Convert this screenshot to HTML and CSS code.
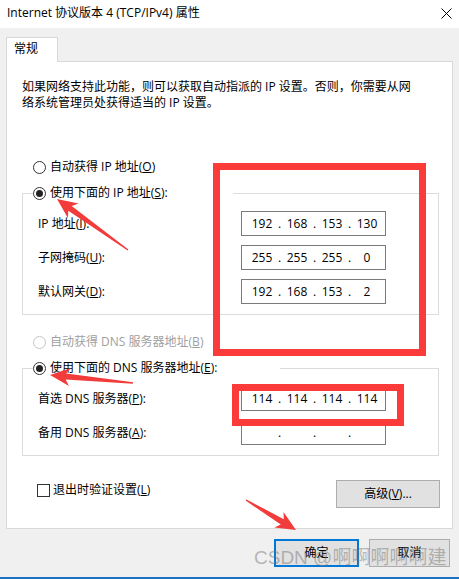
FILE: index.html
```html
<!DOCTYPE html>
<html lang="zh-CN">
<head>
<meta charset="utf-8">
<title>Internet 协议版本 4 (TCP/IPv4) 属性</title>
<link rel="stylesheet" href="styles.css">
</head>
<body>
<div class="window">
  <div class="titlebar">
    <span class="title">Internet 协议版本 4 (TCP/IPv4) 属性</span>
    <svg class="close" width="11" height="11" viewBox="0 0 11 11"><path d="M0.5 0.5 L10.5 10.5 M10.5 0.5 L0.5 10.5" stroke="#000" stroke-width="1" fill="none"/></svg>
  </div>

  <div class="tabs"><div class="tab">常规</div></div>

  <div class="panel">
    <p class="desc">如果网络支持此功能，则可以获取自动指派的 IP 设置。否则，你需要从网<br>络系统管理员处获得适当的 IP 设置。</p>

    <div class="radio-row first"><span class="radio"></span><span>自动获得 IP 地址(<u>O</u>)</span></div>
    <div class="radio-row legend"><span class="legend-box"><span class="radio checked"></span><span>使用下面的 IP 地址(<u>S</u>):</span></span></div>
    <div class="group group-ip">
      <div class="field-row"><span class="label">IP 地址(<u>I</u>):</span>
        <div class="ip"><span class="seg">192</span><span class="dot">.</span><span class="seg">168</span><span class="dot">.</span><span class="seg">153</span><span class="dot">.</span><span class="seg">130</span></div></div>
      <div class="field-row"><span class="label">子网掩码(<u>U</u>):</span>
        <div class="ip"><span class="seg">255</span><span class="dot">.</span><span class="seg">255</span><span class="dot">.</span><span class="seg">255</span><span class="dot">.</span><span class="seg">0</span></div></div>
      <div class="field-row"><span class="label">默认网关(<u>D</u>):</span>
        <div class="ip"><span class="seg">192</span><span class="dot">.</span><span class="seg">168</span><span class="dot">.</span><span class="seg">153</span><span class="dot">.</span><span class="seg">2</span></div></div>
    </div>

    <div class="radio-row dns-auto disabled"><span class="radio"></span><span>自动获得 DNS 服务器地址(<u>B</u>)</span></div>
    <div class="radio-row legend"><span class="legend-box wide"><span class="radio checked"></span><span>使用下面的 DNS 服务器地址(<u>E</u>):</span></span></div>
    <div class="group group-dns">
      <div class="field-row"><span class="label">首选 DNS 服务器(<u>P</u>):</span>
        <div class="ip"><span class="seg">114</span><span class="dot">.</span><span class="seg">114</span><span class="dot">.</span><span class="seg">114</span><span class="dot">.</span><span class="seg">114</span></div></div>
      <div class="field-row"><span class="label">备用 DNS 服务器(<u>A</u>):</span>
        <div class="ip"><span class="seg"></span><span class="dot">.</span><span class="seg"></span><span class="dot">.</span><span class="seg"></span><span class="dot">.</span><span class="seg"></span></div></div>
    </div>

    <div class="options">
      <label class="check"><span class="box"></span><span>退出时验证设置(<u>L</u>)</span></label>
      <button class="btn advanced">高级(<u>V</u>)...</button>
    </div>
  </div>

  <div class="actions">
    <button class="btn ok">确定</button>
    <button class="btn cancel">取消</button>
  </div>

  <div class="accent"></div>

  <svg class="annotations" width="459" height="579" viewBox="0 0 459 579">
    <rect x="216.5" y="166.5" width="206" height="186" fill="none" stroke="#fb3a3a" stroke-width="7"/>
    <rect x="235.5" y="387.5" width="165" height="35" fill="none" stroke="#fb3a3a" stroke-width="7"/>
    <polygon fill="#f23c3c" points="57,199 78.5,203.4 71.7,205.9 128.4,249.4 127.6,250.6 68.3,210.7 67.9,218"/>
    <polygon fill="#f23c3c" points="50,375 70.8,368 66.2,373.5 133.1,382.3 132.9,383.7 65.6,379.5 69,385.9"/>
    <polygon fill="#f23c3c" points="296,530 274.3,527.4 280.8,524.4 245.6,500.6 246.4,499.4 283.8,519.2 283.5,512"/>
  </svg>

  <div class="watermark">CSDN @啊啊啊啊啊建</div>
</div>
</body>
</html>
```

FILE: styles.css
```css
* { box-sizing: border-box; }

html, body {
  margin: 0;
  padding: 0;
}

body {
  width: 459px;
  height: 579px;
  overflow: hidden;
  background: #f0f0f0;
  font-family: "Open Sans", "Noto Sans CJK SC", sans-serif;
  font-size: 12px;
  color: #000;
}

.window {
  position: relative;
  width: 459px;
  height: 579px;
  display: flex;
  flex-direction: column;
}

.titlebar {
  height: 28px;
  background: #fff;
  display: flex;
  align-items: center;
  justify-content: space-between;
  padding: 0 7px 2px 7px;
  line-height: 16px;
}

.tabs {
  margin-top: 9px;
  padding-left: 6px;
  height: 24px;
  display: flex;
}

.tab {
  width: 52px;
  height: 25px;
  background: #fff;
  border: 1px solid #d9d9d9;
  border-bottom: none;
  padding-left: 7px;
  line-height: 22px;
  position: relative;
  z-index: 1;
}

.panel {
  margin-left: 6px;
  width: 447px;
  height: 468px;
  background: #fff;
  border: 1px solid #d9d9d9;
  display: flex;
  flex-direction: column;
}

.desc {
  margin: 17px 0 0 15px;
  line-height: 16px;
}

.radio-row {
  height: 16px;
  line-height: 16px;
  display: flex;
  align-items: center;
  padding-left: 26px;
}

.radio-row.first { margin-top: 48px; }
.radio-row.legend { margin-top: 10px; position: relative; z-index: 1; }
.radio-row.dns-auto { margin-top: 19px; }

.legend-box {
  display: flex;
  align-items: center;
  width: 200px;
  height: 16px;
  background: #fff;
}

.legend-box.wide { width: 247px; }

.radio {
  width: 13px;
  height: 13px;
  border: 1px solid #333;
  border-radius: 50%;
  margin-right: 4px;
  display: flex;
  align-items: center;
  justify-content: center;
  flex: none;
}

.radio.checked::after {
  content: "";
  width: 7px;
  height: 7px;
  border-radius: 50%;
  background: #222;
}

.disabled { color: #a0a0a0; }
.disabled .radio { border-color: #c4c4c4; }

.group {
  margin: -8px 0 0 15px;
  width: 417px;
  border: 1px solid #dcdcdc;
  padding: 17px 0 10px 15px;
  display: flex;
  flex-direction: column;
  gap: 9px;
}

.field-row {
  display: grid;
  grid-template-columns: 203px 145px;
  align-items: center;
  height: 25px;
}

.label { line-height: 16px; }

.ip {
  width: 145px;
  height: 25px;
  border: 1px solid #7a7a7a;
  display: flex;
  align-items: center;
  padding-left: 6px;
  line-height: 16px;
}

.seg {
  width: 28px;
  text-align: center;
}

.dot {
  width: 7px;
  text-align: center;
}

.options {
  margin-top: 24px;
  margin-right: 12px;
  padding-left: 30px;
  display: flex;
  justify-content: space-between;
  align-items: flex-start;
}

.check {
  display: flex;
  align-items: center;
  margin-top: 2px;
  line-height: 16px;
}

.box {
  width: 13px;
  height: 13px;
  border: 1px solid #333;
  margin-right: 3px;
  flex: none;
}

.btn {
  font-family: "Open Sans", "Noto Sans CJK SC", sans-serif;
  font-size: 12px;
  color: #000;
  background: #e1e1e1;
  border: 1px solid #adadad;
  height: 28px;
  line-height: 16px;
  padding: 0;
  margin: 0;
}

.advanced { width: 104px; }

.actions {
  margin-top: 10px;
  display: flex;
  justify-content: flex-end;
  gap: 10px;
  padding-right: 9px;
}

.ok {
  width: 85px;
  border: 2px solid #0078d7;
}

.cancel { width: 81px; }

.accent {
  margin-top: auto;
  height: 2px;
  background: #1c72c4;
}

.annotations {
  position: absolute;
  left: 0;
  top: 0;
  z-index: 5;
  pointer-events: none;
}

.watermark {
  position: absolute;
  left: 254px;
  top: 545px;
  z-index: 6;
  font-family: "Liberation Sans", "Noto Sans CJK SC", sans-serif;
  font-size: 19px;
  line-height: 26px;
  color: rgba(120, 120, 120, 0.5);
  white-space: nowrap;
  pointer-events: none;
}
```
